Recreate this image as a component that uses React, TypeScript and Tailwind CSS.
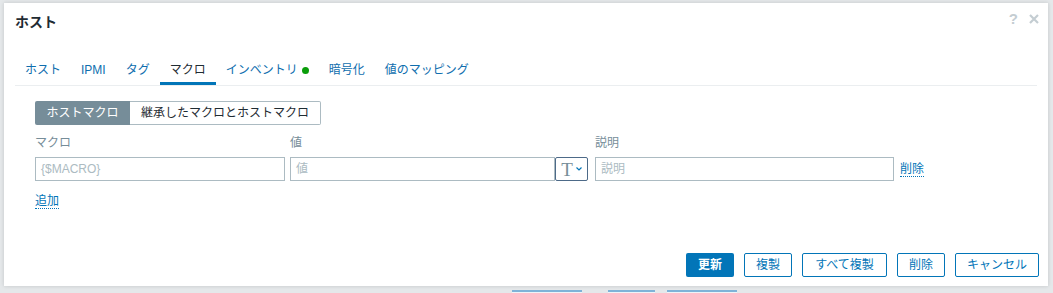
import React from "react";

const FONT = { fontFamily: '"Liberation Sans", Arial, "Noto Sans CJK JP", sans-serif' };

const TABS = ["ホスト", "IPMI", "タグ", "マクロ", "インベントリ", "暗号化", "値のマッピング"];

function Tab({ label, active }: { label: string; active?: boolean }) {
  return (
    <div
      className={`h-[30px] px-[10px] flex items-center border-b-[3px] ${
        active ? "border-[#0275b8] text-[#1f2c33]" : "border-transparent text-[#0f6eae]"
      }`}
    >
      <span className="pt-[3px]">{label}</span>
      {label === "インベントリ" && (
        <span className="ml-[4px] mt-[3px] w-[7px] h-[7px] rounded-full bg-[#0a9d0a] inline-block" />
      )}
    </div>
  );
}

function OutlineButton({ label, w }: { label: string; w: string }) {
  return (
    <button
      className={`${w} h-[24px] border border-[#0275b8] text-[#0275b8] rounded-[2px] bg-white text-[12px] flex items-center justify-center`}
    >
      {label}
    </button>
  );
}

export default function App() {
  return (
    <div className="w-[1053px] h-[293px] bg-[#e5e8ea] overflow-hidden text-[12px]" style={FONT}>
      <div className="pt-[3px] pl-[4px]">
        <div className="w-[1044px] h-[283px] bg-white shadow-[0_0_4px_rgba(0,0,0,0.15)] relative flex flex-col">
          {/* header */}
          <div className="h-[40px] pl-[11px] flex items-center justify-between">
            <h1 className="text-[14px] font-bold text-[#1f2c33] mt-[-2px]">ホスト</h1>
            <div className="flex items-center gap-[11px] pr-[9px] self-start mt-[8px] text-[#c4cdd2]">
              <span className="text-[15px] font-bold leading-none">?</span>
              <svg width="10" height="10" viewBox="0 0 10 10">
                <path d="M1 1 L9 9 M9 1 L1 9" stroke="#c4cdd2" strokeWidth="2.2" />
              </svg>
            </div>
          </div>

          {/* tabs */}
          <div className="mt-[12px] mx-[11px] flex border-b border-[#ebeef0]">
            {TABS.map((t) => (
              <Tab key={t} label={t} active={t === "マクロ"} />
            ))}
          </div>

          {/* body */}
          <div className="pl-[31px] pt-[15px]">
            <div className="flex h-[24px] w-[286px]">
              <div className="w-[95px] bg-[#768d99] text-white flex items-center justify-center rounded-l-[2px]">
                ホストマクロ
              </div>
              <div className="flex-1 border border-l-0 border-[#acbbc2] text-[#1f2c33] flex items-center justify-center rounded-r-[2px]">
                継承したマクロとホストマクロ
              </div>
            </div>

            <div className="flex mt-[10px] text-[#768d99] h-[16px] items-center">
              <span className="w-[255px]">マクロ</span>
              <span className="w-[305px]">値</span>
              <span>説明</span>
            </div>

            <div className="flex items-center mt-[6px] h-[24px]">
              <div className="w-[250px] h-[24px] border border-[#acbbc2] px-[5px] flex items-center text-[#acbbc2]">
                {"{$MACRO}"}
              </div>
              <div className="ml-[5px] w-[265px] h-[24px] border border-[#acbbc2] px-[5px] flex items-center text-[#acbbc2]">
                値
              </div>
              <div className="w-[33px] h-[24px] border border-[#4d6a88] rounded-[2px] flex items-center justify-center gap-[3px]">
                <span
                  className="text-[19px] leading-none text-[#768d99] mt-[1px]"
                  style={{ fontFamily: '"Liberation Serif", serif' }}
                >
                  T
                </span>
                <svg width="6" height="4" viewBox="0 0 6 4">
                  <path d="M0.5 0.5 L3 3 L5.5 0.5" stroke="#0275b8" strokeWidth="1.2" fill="none" />
                </svg>
              </div>
              <div className="ml-[7px] w-[299px] h-[24px] border border-[#acbbc2] px-[5px] flex items-center text-[#acbbc2]">
                説明
              </div>
              <span className="ml-[6px] text-[#0275b8] border-b border-dotted border-[#0275b8] leading-[14px]">
                削除
              </span>
            </div>

            <div className="mt-[11px] h-[16px]">
              <span className="text-[#0275b8] border-b border-dotted border-[#0275b8] leading-[14px]">追加</span>
            </div>
          </div>

          {/* footer buttons */}
          <div className="mt-auto mb-[9px] mr-[9px] flex justify-end gap-[10px]">
            <button className="w-[48px] h-[24px] bg-[#0275b8] text-white rounded-[2px] text-[12px] font-bold flex items-center justify-center">
              更新
            </button>
            <OutlineButton label="複製" w="w-[48px]" />
            <OutlineButton label="すべて複製" w="w-[85px]" />
            <OutlineButton label="削除" w="w-[48px]" />
            <OutlineButton label="キャンセル" w="w-[84px]" />
          </div>
        </div>
      </div>

      {/* page behind the dialog */}
      <div className="flex mt-[4px] pl-[512px] gap-[26px]">
        <div className="w-[70px] h-[10px] border-t-2 border-[#7fb3d8] bg-[#eef4f8]" />
        <div className="flex gap-[12px]">
          <div className="w-[47px] h-[10px] border-t-2 border-[#7fb3d8] bg-[#eef4f8]" />
          <div className="w-[70px] h-[10px] border-t-2 border-[#7fb3d8] bg-[#eef4f8]" />
        </div>
      </div>
    </div>
  );
}
